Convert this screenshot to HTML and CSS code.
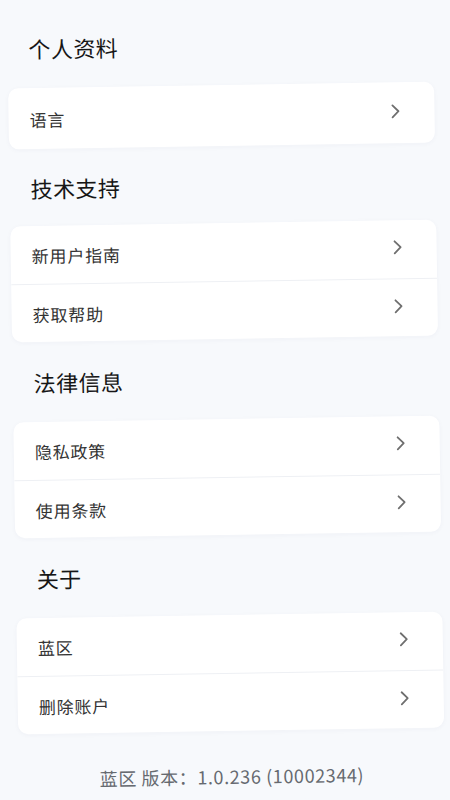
FILE: index.html
```html
<!DOCTYPE html>
<html lang="zh-CN">
<head>
<meta charset="utf-8">
<title>设置</title>
<link rel="stylesheet" href="styles.css">
</head>
<body>
<div class="screen">
  <section class="group">
    <h2 class="group-title">个人资料</h2>
    <div class="card">
      <div class="row row-tall"><span class="label">语言</span><svg class="chev" viewBox="0 0 10 16"><path d="M2 2 L8 8 L2 14"/></svg></div>
    </div>
  </section>
  <section class="group">
    <h2 class="group-title">技术支持</h2>
    <div class="card">
      <div class="row"><span class="label">新用户指南</span><svg class="chev" viewBox="0 0 10 16"><path d="M2 2 L8 8 L2 14"/></svg></div>
      <div class="row"><span class="label">获取帮助</span><svg class="chev" viewBox="0 0 10 16"><path d="M2 2 L8 8 L2 14"/></svg></div>
    </div>
  </section>
  <section class="group">
    <h2 class="group-title">法律信息</h2>
    <div class="card">
      <div class="row"><span class="label">隐私政策</span><svg class="chev" viewBox="0 0 10 16"><path d="M2 2 L8 8 L2 14"/></svg></div>
      <div class="row"><span class="label">使用条款</span><svg class="chev" viewBox="0 0 10 16"><path d="M2 2 L8 8 L2 14"/></svg></div>
    </div>
  </section>
  <section class="group">
    <h2 class="group-title">关于</h2>
    <div class="card">
      <div class="row"><span class="label">蓝区</span><svg class="chev" viewBox="0 0 10 16"><path d="M2 2 L8 8 L2 14"/></svg></div>
      <div class="row"><span class="label">删除账户</span><svg class="chev" viewBox="0 0 10 16"><path d="M2 2 L8 8 L2 14"/></svg></div>
    </div>
  </section>
  <p class="version">蓝区 版本：1.0.236 (10002344)</p>
</div>
</body>
</html>
```

FILE: styles.css
```css
html, body {
  margin: 0;
  padding: 0;
  background: #f7f9fc;
}
body {
  width: 450px;
  height: 800px;
  overflow: hidden;
  font-family: "Noto Sans CJK SC", "Noto Sans", sans-serif;
}
.screen {
  width: 450px;
  height: 800px;
  box-sizing: border-box;
  padding: 4px 11px 0 13px;
  background: #f7f9fc;
  transform: rotate(-0.9deg);
  transform-origin: 225px 400px;
}
.group-title {
  margin: 0;
  height: 80px;
  display: flex;
  align-items: center;
  padding-left: 21px;
  font-size: 22px;
  font-weight: 400;
  color: #161616;
  letter-spacing: 0.4px;
}
.group:first-child .group-title {
  height: 81px;
}
.group:nth-child(2) .group-title {
  height: 77px;
}
.card {
  background: #ffffff;
  border-radius: 10px;
  box-shadow: 0 1px 5px rgba(40, 60, 90, 0.04);
  overflow: hidden;
}
.row {
  height: 58px;
  display: flex;
  align-items: center;
  justify-content: space-between;
  padding: 0 34px 0 21px;
  box-sizing: border-box;
}
.row-tall {
  height: 61px;
}
.row + .row {
  border-top: 1px solid #eef0f4;
}
.label {
  font-size: 17px;
  color: #333333;
  letter-spacing: 0.8px;
  padding-top: 1px;
}
.chev {
  width: 10px;
  height: 16px;
  fill: none;
  stroke: #6f6f6f;
  stroke-width: 1.8;
  stroke-linecap: round;
  stroke-linejoin: round;
  margin-top: -4px;
}
.version {
  margin: 34px 0 0;
  text-align: center;
  font-size: 18px;
  line-height: 22px;
  color: #666a70;
  letter-spacing: 0.6px;
}
```
